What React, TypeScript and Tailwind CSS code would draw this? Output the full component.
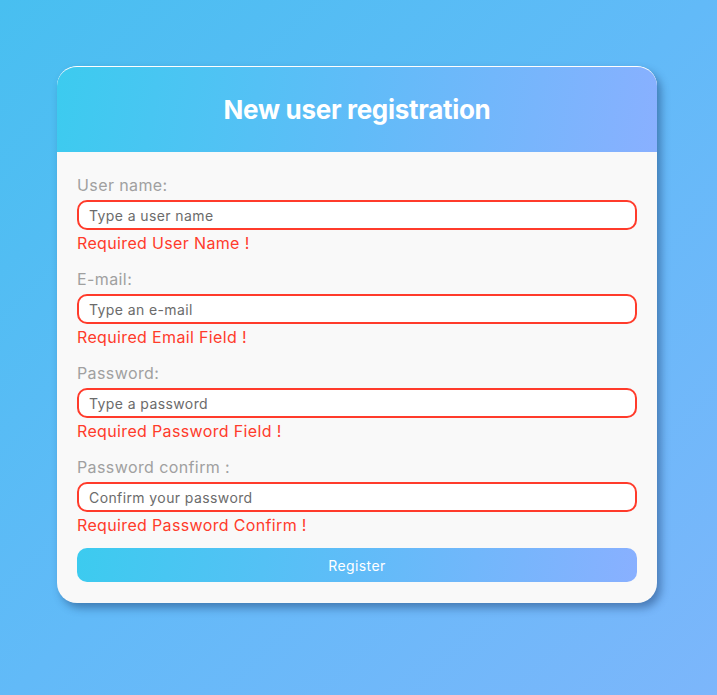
import React from 'react';

const fields = [
  { label: 'User name:', placeholder: 'Type a user name', type: 'text', error: 'Required User Name !' },
  { label: 'E-mail:', placeholder: 'Type an e-mail', type: 'email', error: 'Required Email Field !' },
  { label: 'Password:', placeholder: 'Type a password', type: 'password', error: 'Required Password Field !' },
  { label: 'Password confirm :', placeholder: 'Confirm your password', type: 'password', error: 'Required Password Confirm !' },
];

export default function App() {
  return (
    <div className="min-h-[695px] w-full bg-[linear-gradient(135deg,#48bff0_0%,#62baf8_50%,#7cb6fb_100%)] pt-[66px] font-['Inter',sans-serif]">
      {/* Card */}
      <div className="ml-[57px] w-[600px] overflow-hidden rounded-[20px] border-t border-white bg-[#f9f9f9] shadow-[4px_5px_8px_rgba(20,50,100,0.45)]">
        <div className="flex h-[85px] items-center justify-center bg-[linear-gradient(100deg,#3ccbef_0%,#60bcf8_50%,#89b0ff_100%)]">
          <h1 className="text-[26px] font-bold tracking-[-0.3px] text-white">New user registration</h1>
        </div>

        <form className="px-5 pt-[21px] pb-[21px]" onSubmit={(e) => e.preventDefault()}>
          {fields.map((f) => (
            <div key={f.label} className="mb-3 flex flex-col">
              <label className="mb-[3px] text-[16px] leading-6 tracking-[0.4px] text-[#a0a0a0]">{f.label}</label>
              <input
                type={f.type}
                placeholder={f.placeholder}
                className="h-[30px] w-full rounded-[10px] border-2 border-[#ff3b2b] bg-white px-[10px] text-[14px] tracking-[0.4px] text-[#444] outline-none placeholder:text-[#6b6b6b]"
              />
              <span className="mt-px text-[16px] leading-6 tracking-[0.35px] text-[#ff3b2b]">{f.error}</span>
            </div>
          ))}
          <button
            type="submit"
            className="-mt-px h-[34px] w-full rounded-[10px] bg-[linear-gradient(100deg,#3ccbef_0%,#60bcf8_50%,#89b0ff_100%)] text-[14px] tracking-[0.4px] text-white"
          >
            Register
          </button>
        </form>
      </div>
    </div>
  );
}
